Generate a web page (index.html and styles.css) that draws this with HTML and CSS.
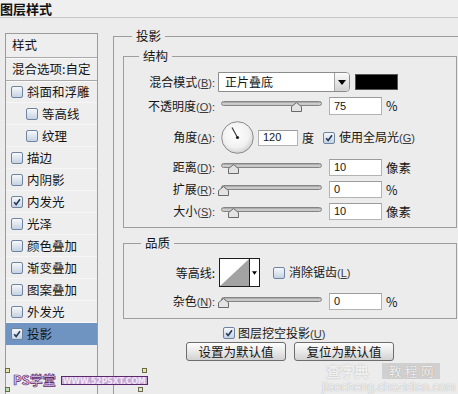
FILE: index.html
```html
<!DOCTYPE html>
<html lang="zh-CN">
<head>
<meta charset="utf-8">
<title>图层样式</title>
<link rel="stylesheet" href="styles.css">
</head>
<body>
<div class="titlebar">图层样式</div>
<div class="content">
  <aside class="sidebar">
    <div class="side-head">样式</div>
    <div class="side-head">混合选项:自定</div>
    <div class="side-item"><span class="cb"></span>斜面和浮雕</div>
    <div class="side-item sub"><span class="cb"></span>等高线</div>
    <div class="side-item sub"><span class="cb"></span>纹理</div>
    <div class="side-item"><span class="cb"></span>描边</div>
    <div class="side-item"><span class="cb"></span>内阴影</div>
    <div class="side-item"><span class="cb"><svg viewBox="0 0 12 12"><path d="M2.6 6.2 L5 8.9 L9.6 2.6" /></svg></span>内发光</div>
    <div class="side-item"><span class="cb"></span>光泽</div>
    <div class="side-item"><span class="cb"></span>颜色叠加</div>
    <div class="side-item"><span class="cb"></span>渐变叠加</div>
    <div class="side-item"><span class="cb"></span>图案叠加</div>
    <div class="side-item"><span class="cb"></span>外发光</div>
    <div class="side-item selected"><span class="cb"><svg viewBox="0 0 12 12"><path d="M2.6 6.2 L5 8.9 L9.6 2.6" /></svg></span>投影</div>
  </aside>
  <main class="main">
    <fieldset class="group outer">
      <legend>投影</legend>
      <fieldset class="group structure">
        <legend>结构</legend>
        <div class="row r-blend">
          <span class="label">混合模式<span class="k">(<u>B</u>):</span></span>
          <div class="select"><span class="select-text">正片叠底</span><span class="select-btn"><svg viewBox="0 0 8 5"><path d="M0 0 H8 L4 5 Z"/></svg></span></div>
          <span class="swatch"></span>
        </div>
        <div class="row r-opacity">
          <span class="label">不透明度<span class="k">(<u>O</u>):</span></span>
          <div class="slider"><span class="track"></span><svg class="thumb" style="left:73px" viewBox="0 0 11 10"><path d="M0.5 9.5 V4.6 L5.5 0.6 L10.5 4.6 V9.5 Z"/></svg></div>
          <span class="num">75</span><span class="unit">%</span>
        </div>
        <div class="row r-angle">
          <span class="label">角度<span class="k">(<u>A</u>):</span></span>
          <svg class="dial" viewBox="0 0 33 33">
            <defs><radialGradient id="dg" cx="0.45" cy="0.4" r="0.6"><stop offset="0" stop-color="#ffffff"/><stop offset="0.7" stop-color="#f1f1f1"/><stop offset="1" stop-color="#d2d2d2"/></radialGradient></defs>
            <circle cx="16.5" cy="16.5" r="15.8" fill="url(#dg)" stroke="#8b8b8b" stroke-width="1"/>
            <line x1="16.5" y1="16.5" x2="11" y2="6.5" stroke="#3a3a3a" stroke-width="1.2"/>
            <circle cx="16.5" cy="16.5" r="1.6" fill="#222"/>
          </svg>
          <span class="num num-angle">120</span><span class="unit">度</span>
          <span class="cb cb-global"><svg viewBox="0 0 12 12"><path d="M2.6 6.2 L5 8.9 L9.6 2.6" /></svg></span><span class="cb-label">使用全局光<span class="k">(<u>G</u>)</span></span>
        </div>
        <div class="row r-small">
          <span class="label">距离<span class="k">(<u>D</u>):</span></span>
          <div class="slider"><span class="track"></span><svg class="thumb" style="left:10px" viewBox="0 0 11 10"><path d="M0.5 9.5 V4.6 L5.5 0.6 L10.5 4.6 V9.5 Z"/></svg></div>
          <span class="num">10</span><span class="unit">像素</span>
        </div>
        <div class="row r-small">
          <span class="label">扩展<span class="k">(<u>R</u>):</span></span>
          <div class="slider"><span class="track"></span><svg class="thumb" style="left:0px" viewBox="0 0 11 10"><path d="M0.5 9.5 V4.6 L5.5 0.6 L10.5 4.6 V9.5 Z"/></svg></div>
          <span class="num">0</span><span class="unit">%</span>
        </div>
        <div class="row r-small last">
          <span class="label">大小<span class="k">(<u>S</u>):</span></span>
          <div class="slider"><span class="track"></span><svg class="thumb" style="left:10px" viewBox="0 0 11 10"><path d="M0.5 9.5 V4.6 L5.5 0.6 L10.5 4.6 V9.5 Z"/></svg></div>
          <span class="num">10</span><span class="unit">像素</span>
        </div>
      </fieldset>
      <fieldset class="group quality">
        <legend>品质</legend>
        <div class="row r-contour">
          <span class="label">等高线:</span>
          <div class="contour">
            <svg class="contour-graph" viewBox="0 0 30 27" preserveAspectRatio="none"><path d="M0 27 L30 0 V27 Z" fill="#a3a3a3"/></svg>
            <span class="contour-btn"><svg viewBox="0 0 6 4"><path d="M0 0 H6 L3 4 Z"/></svg></span>
          </div>
          <span class="cb cb-anti"></span><span class="cb-label">消除锯齿<span class="k">(<u>L</u>)</span></span>
        </div>
        <div class="row r-small last">
          <span class="label">杂色<span class="k">(<u>N</u>):</span></span>
          <div class="slider"><span class="track"></span><svg class="thumb" style="left:0px" viewBox="0 0 11 10"><path d="M0.5 9.5 V4.6 L5.5 0.6 L10.5 4.6 V9.5 Z"/></svg></div>
          <span class="num">0</span><span class="unit">%</span>
        </div>
      </fieldset>
      <div class="knockout">
        <span class="cb"><svg viewBox="0 0 12 12"><path d="M2.6 6.2 L5 8.9 L9.6 2.6" /></svg></span><span class="cb-label">图层挖空投影<span class="k">(<u>U</u>)</span></span>
      </div>
      <div class="buttons">
        <button class="btn">设置为默认值</button>
        <button class="btn">复位为默认值</button>
      </div>
    </fieldset>
  </main>
</div>

<div class="wm-left">
  <span class="corner c1"></span><span class="corner c2"></span>
  <span class="wm-ps">PS学堂</span><span class="wm-url">WWW.52PSXT.COM</span>
  <span class="corner c3"></span><span class="corner c4"></span>
</div>
<div class="wm-right">
  <div class="wm-top"><span class="wm-cz">查字典</span><span class="wm-box">教 程 网</span></div>
  <div class="wm-dom">jiaocheng.chazidian.com</div>
</div>
</body>
</html>
```

FILE: styles.css
```css
* { box-sizing: border-box; }
html, body { margin: 0; padding: 0; }
body {
  width: 458px;
  height: 394px;
  overflow: hidden;
  position: relative;
  background: #ececec;
  font-family: "Noto Sans CJK SC", "Liberation Sans", sans-serif;
  font-size: 12px;
  line-height: 16px;
  color: #151515;
}

.titlebar {
  height: 18px;
  border-bottom: 1px solid #c6c6c6;
  font-weight: bold;
  font-size: 13px;
  line-height: 17px;
  padding-left: 0;
  color: #111;
  background: #efefef;
}

.content {
  display: flex;
  padding-top: 10px;
  height: 376px;
  overflow: hidden;
}

/* sidebar */
.sidebar {
  margin: 5px 0 0 5px;
  width: 93px;
  height: 361px;
  flex: none;
  border: 1px solid #9b9b9b;
  border-bottom: none;
  background: #eeeeee;
}
.side-head {
  height: 24px;
  line-height: 22px;
  padding-left: 6px;
  border-bottom: 1px solid #a9a9a9;
  box-shadow: 0 1px 0 #fafafa;
  font-size: 12.5px;
}
.side-head:nth-child(2) { height: 23px; }
.side-item {
  height: 22px;
  display: flex;
  align-items: center;
  padding-left: 5px;
  border-bottom: 1px solid #f6f6f6;
  font-size: 12.5px;
}
.side-item .cb { margin-right: 4px; }
.side-item.sub { padding-left: 20px; }
.side-item.selected { background: #6f94c1; border-bottom-color: #6f94c1; }

/* checkbox */
.cb {
  width: 12px;
  height: 12px;
  flex: none;
  display: inline-block;
  border: 1px solid #6f84a0;
  border-radius: 2px;
  background: linear-gradient(#f6f8fb, #c5d2e2);
}
.cb svg {
  display: block;
  width: 10px;
  height: 10px;
  fill: none;
  stroke: #20385a;
  stroke-width: 1.9;
}
.cb-label { margin-left: 4px; white-space: nowrap; }

.k {
  font-family: "Liberation Sans", sans-serif;
  font-size: 11px;
  color: #3a3a3a;
}

/* main */
.main { flex: 1; min-width: 0; }

.group {
  margin: 0;
  padding: 0;
  min-width: 0;
  border: 1px solid #9d9d9d;
}
.group > legend {
  padding: 0 4px;
  line-height: 16px;
  font-size: 12.5px;
}
.outer {
  margin-left: 15px;
  width: 345px;
  height: 366px;
  border-right: none;
  border-bottom: none;
}
.outer > legend { margin-left: 18px; }

.structure {
  margin: 4px 0 0 9px;
  width: 334px;
  padding: 8px 0 7px 0;
}
.structure > legend { margin-left: 15px; }

.quality {
  margin: 7px 0 0 9px;
  width: 334px;
  padding: 7px 0 8px 0;
}
.quality > legend { margin-left: 17px; }

.row {
  display: flex;
  align-items: center;
  white-space: nowrap;
}
.row .label {
  width: 91px;
  flex: none;
  text-align: right;
}
.r-blend { height: 20px; margin-bottom: 5px; }
.r-opacity { height: 18px; margin-bottom: 6px; }
.r-angle { height: 33px; margin-bottom: 5px; }
.r-small { height: 17px; margin-bottom: 5px; }
.r-small.last { margin-bottom: 0; }
.r-contour { height: 29px; margin-bottom: 6px; }

/* select */
.select {
  margin-left: 3px;
  width: 132px;
  height: 20px;
  display: flex;
  border: 1px solid #8c8c8c;
  border-radius: 0 4px 4px 0;
  background: #fff;
}
.select-text { flex: 1; padding-left: 6px; line-height: 18px; }
.select-btn {
  width: 15px;
  border-left: 1px solid #a5a5a5;
  border-radius: 0 3px 3px 0;
  background: linear-gradient(#fbfbfb, #d2d2d2);
  display: flex;
  align-items: center;
  justify-content: center;
}
.select-btn svg { width: 8px; height: 5px; fill: #000; }
.swatch {
  margin-left: 5px;
  width: 43px;
  height: 16px;
  background: #000;
  border: 1px solid #555;
}

/* slider */
.slider {
  margin-left: 3px;
  width: 104px;
  height: 100%;
  position: relative;
  flex: none;
}
.track {
  position: absolute;
  left: 3px;
  right: 0;
  top: 4px;
  height: 5px;
  border: 1px solid #858585;
  border-radius: 3px;
  background: linear-gradient(#9d9d9d, #d6d6d6 60%, #bdbdbd);
}
.thumb {
  position: absolute;
  top: 5px;
  width: 11px;
  height: 10px;
  fill: #e3e3e3;
  stroke: #6a6a6a;
  stroke-width: 1;
}

/* numeric field */
.num {
  margin-left: 7px;
  width: 53px;
  height: 100%;
  flex: none;
  background: #fff;
  border: 1px solid #b3b3b3;
  border-top-color: #9c9c9c;
  font-family: "Liberation Sans", sans-serif;
  font-size: 11px;
  line-height: 15px;
  padding-left: 4px;
  display: flex;
  align-items: center;
}
.unit { margin-left: 4px; }
.r-opacity .unit, .r-small .unit { font-size: 12.5px; }

.dial {
  margin-left: 6px;
  width: 33px;
  height: 33px;
  flex: none;
}
.num-angle {
  margin-left: 4px;
  width: 40px;
  height: 16px;
}
.cb-global { margin-left: 9px; }

/* contour */
.contour {
  margin-left: 4px;
  width: 41px;
  height: 29px;
  display: flex;
  border: 1px solid #1e1e1e;
  background: #fff;
}
.contour-graph { width: 29px; height: 27px; display: block; }
.contour-btn {
  width: 10px;
  border-left: 1px solid #1e1e1e;
  display: flex;
  align-items: center;
  justify-content: center;
}
.contour-btn svg { width: 5px; height: 4px; fill: #000; }
.cb-anti { margin-left: 13px; }

/* bottom */
.knockout {
  margin: 7px 0 0 109px;
  height: 14px;
  display: flex;
  align-items: center;
}
.knockout .cb-label { margin-left: 3px; }

.buttons {
  margin: 2px 0 0 9px;
  width: 334px;
  display: flex;
  justify-content: center;
  gap: 8px;
}
.btn {
  width: 100px;
  height: 19px;
  padding: 0;
  border: 1px solid #6d6d6d;
  border-radius: 3px;
  background: linear-gradient(#fdfdfd, #e9e9e9 50%, #d2d2d2);
  font-family: "Noto Sans CJK SC", sans-serif;
  font-size: 12.5px;
  line-height: 16px;
  color: #151515;
}

/* watermarks */
.wm-left {
  position: absolute;
  left: 5px;
  top: 368px;
  width: 142px;
  height: 24px;
  display: flex;
  align-items: center;
  white-space: nowrap;
}
.corner {
  position: absolute;
  width: 5px;
  height: 5px;
  border: 1px solid #6b6b4a;
}
.c1 { left: 0; top: 0; background: #e8e6a8; }
.c2 { left: 0; bottom: 0; background: #b8e0b0; }
.c3 { right: 0; top: 0; background: #e8e6a8; }
.c4 { right: 4px; bottom: 0; background: #e0e0e0; }
.wm-ps {
  flex: none;
  margin-left: 8px;
  font-family: "Noto Sans CJK SC", sans-serif;
  font-weight: bold;
  font-size: 13px;
  line-height: 16px;
  color: #e6d2ee;
  -webkit-text-stroke: 0.7px #5a2770;
}
.wm-url {
  flex: none;
  margin-left: 5px;
  padding: 0 1px;
  height: 9px;
  font-family: "DejaVu Sans", sans-serif;
  font-weight: bold;
  font-size: 8px;
  line-height: 9px;
  color: #f2e6f6;
  background: #c8a8d4;
  border: 1px solid #5a2770;
  letter-spacing: -0.2px;
}

.wm-right {
  position: absolute;
  left: 322px;
  top: 362px;
  width: 130px;
  color: rgba(255,255,255,0.85);
  text-shadow: 0 0 1px rgba(120,120,120,0.7);
}
.wm-top { display: flex; align-items: center; height: 18px; }
.wm-cz {
  margin-left: 4px;
  font-size: 15px;
  font-weight: bold;
  letter-spacing: -1px;
}
.wm-box {
  margin-left: 14px;
  height: 16px;
  width: 58px;
  background: rgba(190,190,190,0.6);
  font-size: 13px;
  line-height: 16px;
  text-align: center;
}
.wm-dom {
  margin-top: 1px;
  font-family: "Liberation Sans", sans-serif;
  font-size: 12px;
  line-height: 12px;
  letter-spacing: 0.1px;
}
```
